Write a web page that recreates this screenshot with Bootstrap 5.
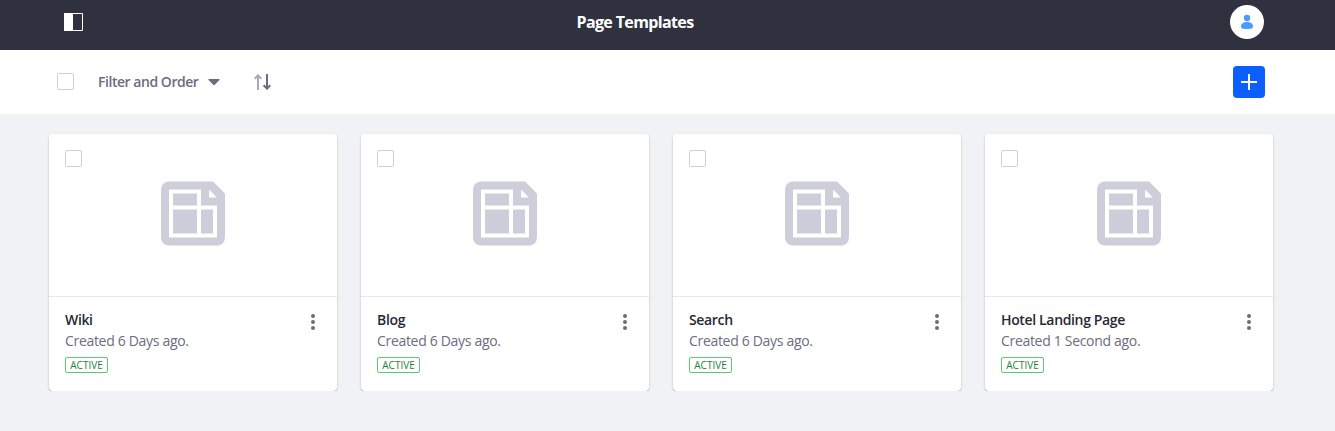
<!DOCTYPE html>
<html lang="en">
<head>
<meta charset="utf-8">
<meta name="viewport" content="width=device-width, initial-scale=1">
<title>Page Templates</title>
<link href="https://cdn.jsdelivr.net/npm/bootstrap@5.3.0/dist/css/bootstrap.min.css" rel="stylesheet">
<style>
body{background:#f1f2f5;font-family:"Open Sans","Noto Sans",sans-serif;font-size:14px;line-height:21px;color:#272833;overflow:hidden}
svg{display:block}
.topbar{height:50px;background:#30313f;padding:0 71px 0 64px}
.topbar .side{width:100px;height:44px}
.topbar .side-end{width:158px}
.topbar h1{font-size:16px;font-weight:700;letter-spacing:-.63px;line-height:24px;height:44px;padding-top:10px}
.avatar{width:34px;height:34px}
.toolbar{height:64px;padding:0 70px 0 57px}
.check-box{appearance:none;width:17px;height:17px;border:1px solid #cdced9;border-radius:2px;background:#fff;margin:0;display:block}
.toolbar .check-box{margin-top:-1px}
.filter{color:#6b6c7e;font-weight:600;letter-spacing:-.46px;margin:-1px 0 0 24px;width:102px}
.sort{margin-left:34px}
.add-btn{width:32px;height:32px;background:#0b5fff;border-radius:4px}
.tiles{padding:20px 62px 0 49px;gap:24px}
.tile{width:288px;height:257px;border:0;border-radius:4px;box-shadow:0 1px 3px -1px rgba(0,0,0,.5),0 1px 1px rgba(0,0,0,.12)}
.preview{height:163px;border-bottom:1px solid #e7e7ed;padding:16px}
.preview svg{margin:14px auto 0}
.info{padding:12px 22px 0 16px}
.info svg{margin-top:5px}
.name{font-weight:600;letter-spacing:-.35px}
.date{color:#6b6c7e;letter-spacing:-.31px}
.state{font-size:10px;line-height:15px;height:16px;width:43px;border:1px solid #5aca75;border-radius:2px;color:#287d3c;font-weight:500;margin-top:6px;text-align:center}
</style>
</head>
<body>
<svg class="d-none">
<symbol id="page" viewBox="0 0 64 64"><path fill="#cdced9" d="M8 0H52L64 12V56a8 8 0 0 1-8 8H8a8 8 0 0 1-8-8V8a8 8 0 0 1 8-8z"/><path fill="#fff" fill-rule="evenodd" d="M8 8H40V24H56V56H8zM12 12V24H36V12zM12 28V52H36V28zM40 28V52H52V28zM48 8L56 16H48z"/></symbol>
<symbol id="dots" viewBox="0 0 4 16"><circle cx="2" cy="2" r="2"/><circle cx="2" cy="8" r="2"/><circle cx="2" cy="14" r="2"/></symbol>
</svg>
<header class="topbar d-flex justify-content-between align-items-start">
  <div class="side d-flex align-items-center"><svg width="19" height="18"><path fill="none" stroke="#fff" d="M.5.5h18v17H.5z"/><path fill="#fff" d="M0 0h9v18H0z"/></svg></div>
  <h1 class="text-white m-0">Page Templates</h1>
  <div class="side side-end d-flex align-items-center justify-content-end"><svg class="avatar" viewBox="0 0 34 34"><circle cx="17" cy="17" r="17" fill="#fff"/><g fill="#4b9bff"><circle cx="17" cy="13" r="3.2"/><path d="M11 21.500c0-3 2.500-4.500 6-4.500s6 1.500 6 4.500c0 1.700-1.500 2.500-6 2.500s-6-.8-6-2.500z"/></g></svg></div>
</header>
<div class="toolbar bg-white d-flex align-items-center">
  <input type="checkbox" class="check-box" aria-label="Select all">
  <span class="filter text-nowrap">Filter and Order</span>
  <svg class="ms-2" width="12" height="6"><path fill="#6b6c7e" d="M1 0h10q1 .2.500 1L7 5.500q-1 1-2 0L.5 1Q0 .2 1 0z"/></svg>
  <svg class="sort" width="17" height="16"><g stroke-width="2" fill="none"><path stroke="#a7a9bc" d="M4 16V1M.6 4.700 4 1.300l3.400 3.400"/><path stroke="#6b6c7e" d="M13 0v15M9.600 11.300l3.400 3.400 3.400-3.400"/></g></svg>
  <button class="add-btn btn p-0 border-0 ms-auto d-flex align-items-center justify-content-center" aria-label="Add"><svg width="16" height="16"><path fill="#fff" d="M7 0h2v7h7v2H9v7H7V9H0V7h7z"/></svg></button>
</div>
<main class="tiles d-flex">
  <article class="tile card"><div class="preview"><input type="checkbox" class="check-box" aria-label="Select Wiki"><svg width="64" height="65"><use href="#page"/></svg></div><div class="info d-flex justify-content-between"><div><div class="name">Wiki</div><div class="date">Created 6 Days ago.</div><div class="state">ACTIVE</div></div><svg width="4" height="16" fill="#6b6c7e"><use href="#dots"/></svg></div></article>
  <article class="tile card"><div class="preview"><input type="checkbox" class="check-box" aria-label="Select Blog"><svg width="64" height="65"><use href="#page"/></svg></div><div class="info d-flex justify-content-between"><div><div class="name">Blog</div><div class="date">Created 6 Days ago.</div><div class="state">ACTIVE</div></div><svg width="4" height="16" fill="#6b6c7e"><use href="#dots"/></svg></div></article>
  <article class="tile card"><div class="preview"><input type="checkbox" class="check-box" aria-label="Select Search"><svg width="64" height="65"><use href="#page"/></svg></div><div class="info d-flex justify-content-between"><div><div class="name">Search</div><div class="date">Created 6 Days ago.</div><div class="state">ACTIVE</div></div><svg width="4" height="16" fill="#6b6c7e"><use href="#dots"/></svg></div></article>
  <article class="tile card"><div class="preview"><input type="checkbox" class="check-box" aria-label="Select Hotel Landing Page"><svg width="64" height="65"><use href="#page"/></svg></div><div class="info d-flex justify-content-between"><div><div class="name">Hotel Landing Page</div><div class="date">Created 1 Second ago.</div><div class="state">ACTIVE</div></div><svg width="4" height="16" fill="#6b6c7e"><use href="#dots"/></svg></div></article>
</main>
<script src="https://cdn.jsdelivr.net/npm/bootstrap@5.3.0/dist/js/bootstrap.bundle.min.js"></script>
</body>
</html>
